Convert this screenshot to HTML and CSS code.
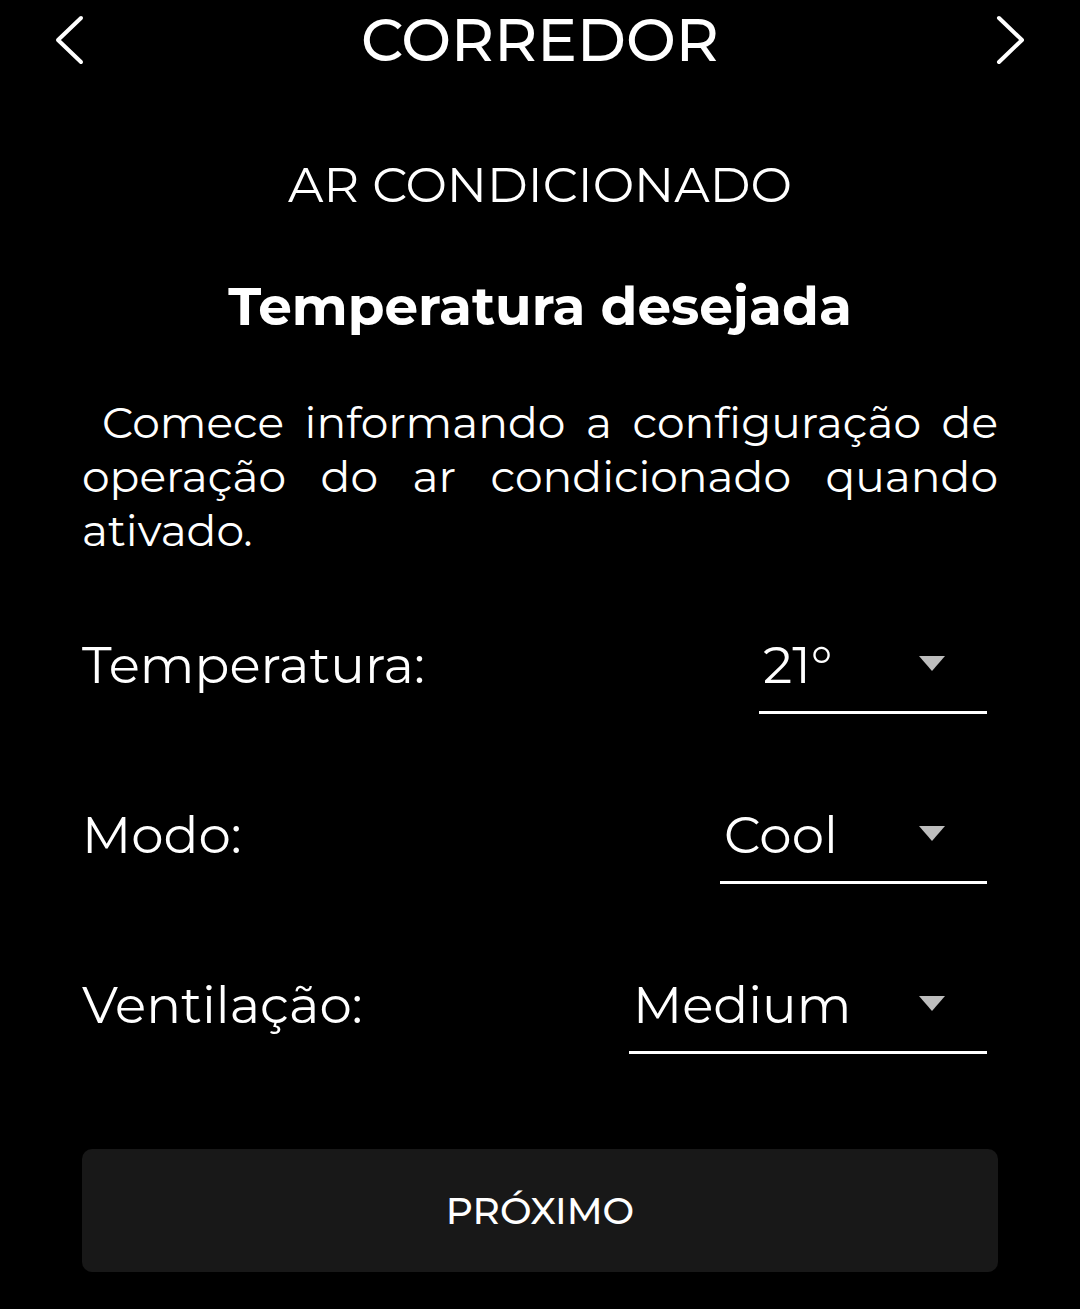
FILE: index.html
```html
<!DOCTYPE html>
<html lang="pt-BR">
<head>
<meta charset="utf-8">
<title>Corredor - Ar condicionado</title>
<link rel="stylesheet" href="styles.css">
</head>
<body>
<div class="screen">
  <header class="topbar">
    <svg class="chev" viewBox="0 0 30 50" aria-hidden="true"><path d="M26 3 L3 25 L26 47"/></svg>
    <h1 class="title">CORREDOR</h1>
    <svg class="chev" viewBox="0 0 30 50" aria-hidden="true"><path d="M4 3 L27 25 L4 47"/></svg>
  </header>

  <main class="content">
    <h2 class="section">AR CONDICIONADO</h2>
    <h3 class="subtitle">Temperatura desejada</h3>
    <p class="intro">Comece informando a configuração de operação do ar condicionado quando ativado.</p>

    <div class="row">
      <span class="label">Temperatura:</span>
      <div class="select select-temp">
        <span class="value">21°</span>
        <span class="caret"></span>
      </div>
    </div>

    <div class="row">
      <span class="label">Modo:</span>
      <div class="select select-mode">
        <span class="value">Cool</span>
        <span class="caret"></span>
      </div>
    </div>

    <div class="row">
      <span class="label">Ventilação:</span>
      <div class="select select-fan">
        <span class="value">Medium</span>
        <span class="caret"></span>
      </div>
    </div>

    <button class="next">PRÓXIMO</button>
  </main>
</div>
</body>
</html>
```
FILE: styles.css
```css
* { box-sizing: border-box; }

html, body {
  margin: 0;
  padding: 0;
  background: #000;
}

body {
  color: #fff;
  font-family: "Montserrat", "DejaVu Sans", sans-serif;
}

.screen {
  width: 1080px;
  min-height: 1309px;
}

.topbar {
  height: 80px;
  padding: 0 55px;
  display: flex;
  align-items: center;
  justify-content: space-between;
}

.chev {
  width: 30px;
  height: 50px;
  fill: none;
  stroke: #fff;
  stroke-width: 4;
  stroke-linecap: round;
  stroke-linejoin: round;
}

.title {
  margin: 0;
  font-size: 59.3px;
  font-weight: 500;
  line-height: 80px;
}

.content {
  padding: 0 82px;
  display: flex;
  flex-direction: column;
}

.section {
  margin: 74px 0 0;
  font-size: 49.4px;
  font-weight: 400;
  line-height: 60px;
  text-align: center;
}

.subtitle {
  margin: 60px 0 0;
  font-size: 53.3px;
  font-weight: 700;
  line-height: 64px;
  text-align: center;
}

.intro {
  margin: 57px 0 0;
  font-size: 44px;
  line-height: 54px;
  text-align: justify;
  text-indent: 20px;
}

.row {
  display: flex;
  justify-content: space-between;
  align-items: flex-start;
  margin-top: 89px;
}

.intro + .row {
  margin-top: 76px;
}

.label {
  font-size: 51.5px;
  line-height: 64px;
}

.select {
  height: 81px;
  margin-right: 11px;
  padding: 0 42px 14px 4px;
  border-bottom: 3px solid #fff;
  display: flex;
  align-items: center;
  justify-content: space-between;
}

.select-temp { width: 228px; }
.select-mode { width: 267px; }
.select-fan  { width: 358px; }

.value {
  font-size: 51.5px;
  line-height: 64px;
}

.caret {
  width: 0;
  height: 0;
  border-left: 13.5px solid transparent;
  border-right: 13.5px solid transparent;
  border-top: 15px solid #bdbdbd;
  margin-bottom: 4px;
}

.next {
  margin-top: 95px;
  height: 123px;
  width: 100%;
  border: none;
  border-radius: 10px;
  background: #181818;
  color: #fff;
  font-family: "Montserrat", "DejaVu Sans", sans-serif;
  font-size: 37.6px;
  font-weight: 500;
  display: flex;
  align-items: center;
  justify-content: center;
}
```
